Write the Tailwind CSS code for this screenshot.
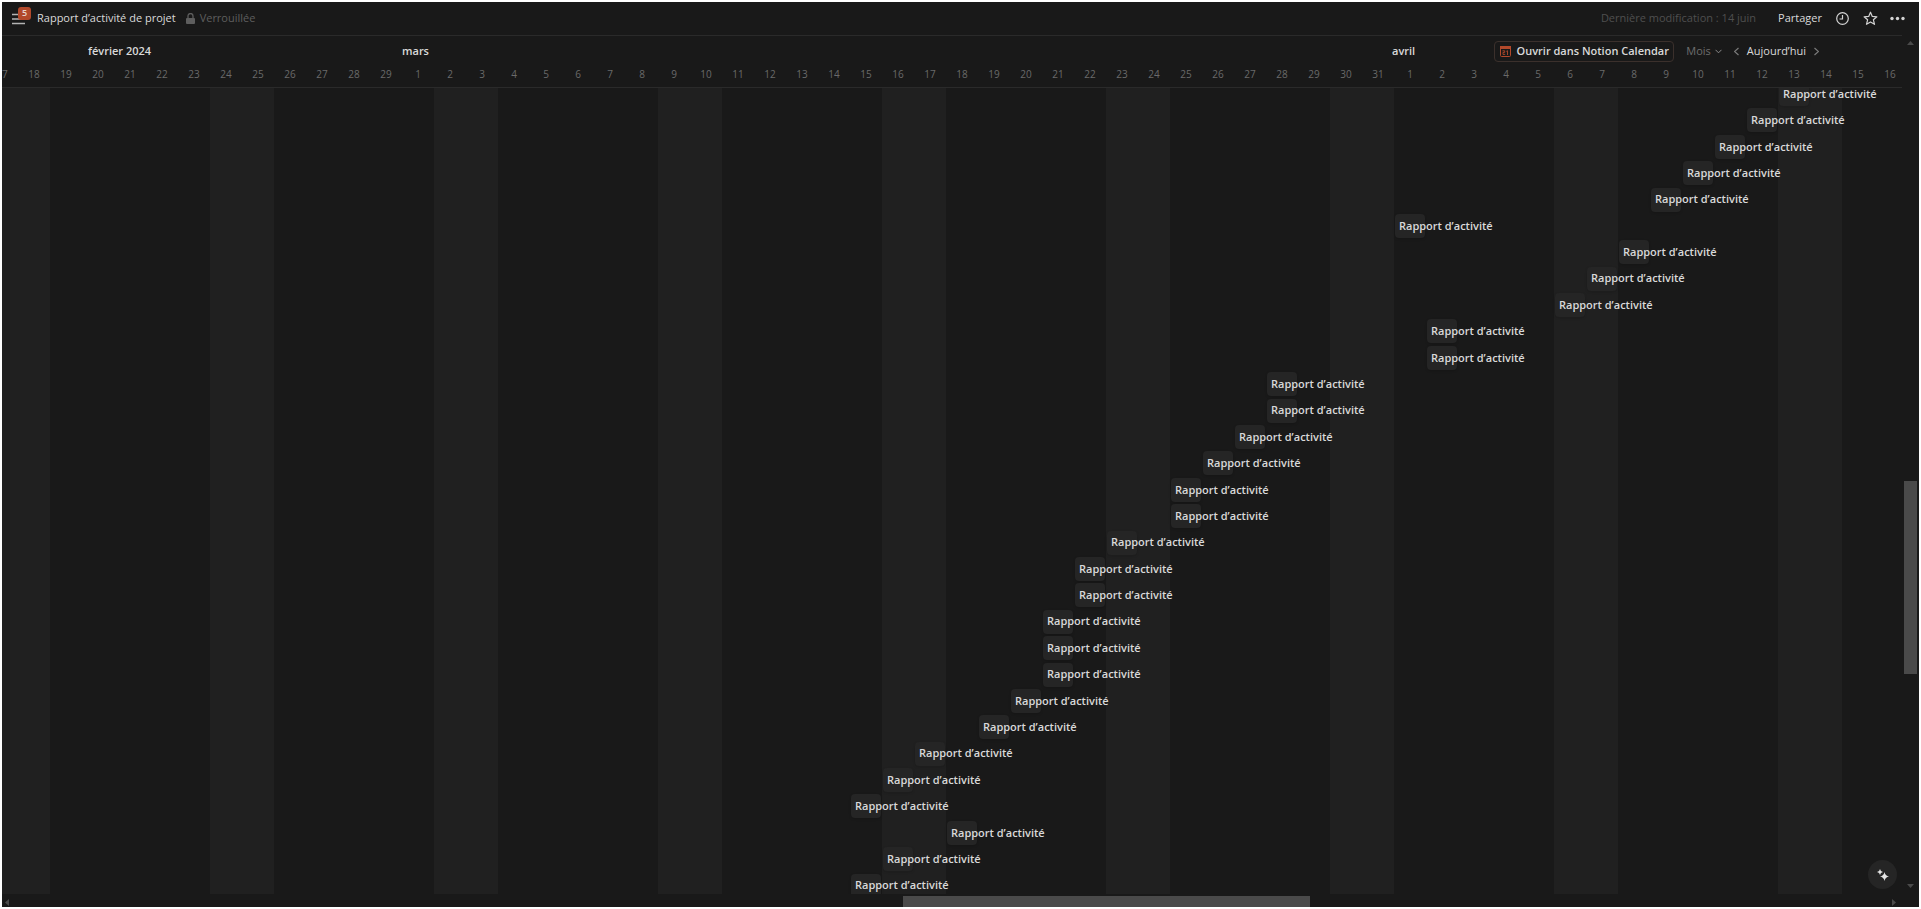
<!DOCTYPE html>
<html lang="fr">
<head>
<meta charset="utf-8">
<title>Rapport d’activité de projet</title>
<script src="https://cdn.jsdelivr.net/npm/@tailwindcss/browser@4"></script>
</head>
<body class="bg-white">
<div class="flex h-screen flex-col border-2 border-white bg-[#191919] font-['Open_Sans',sans-serif] text-[#d9d9d9]">
  <header class="flex h-[33px] shrink-0 items-center pr-3.5 pl-2.5 text-[11px]">
    <button class="relative h-5 w-[21px]" aria-label="Menu">
      <svg class="absolute top-1 left-0 h-3 w-[13px]" viewBox="0 0 13 12" stroke="#b4b4b4" stroke-width="1.5"><path d="M0 1.5h13M0 6h13M0 10.5h13"/></svg>
      <span class="absolute -top-0.5 left-1.5 flex h-[13px] w-[13px] items-center justify-center rounded-[3px] bg-[#b2492b] text-[9px] font-semibold text-[#e8d5cf]">5</span>
    </button>
    <h1 class="ml-1 font-medium">Rapport d’activité de projet</h1>
    <svg class="mr-[5px] ml-2.5 h-3 w-[9px]" viewBox="0 0 9 12" fill="#5e5e5e"><path d="M1 5h7a1 1 0 0 1 1 1v4a1 1 0 0 1-1 1H1a1 1 0 0 1-1-1V6a1 1 0 0 1 1-1z"/><path d="M2 5.500V3a2.500 2.500 0 0 1 5 0v2.500" fill="none" stroke="#5e5e5e" stroke-width="1.300"/></svg>
    <span class="text-[#5e5e5e]">Verrouillée</span>
    <span class="mr-[22px] ml-auto text-[#4f4f4f]">Dernière modification : 14 juin</span>
    <button class="font-medium">Partager</button>
    <button class="ml-3.5" aria-label="Historique"><svg class="size-[13px]" viewBox="0 0 13 13" fill="none" stroke="#d4d4d4" stroke-width="1.200"><circle cx="6.500" cy="6.500" r="5.800"/><path d="M6.500 3v4H3.500"/></svg></button>
    <button class="ml-3.5" aria-label="Favori"><svg class="size-[15px]" viewBox="0 0 15 15" fill="none" stroke="#d4d4d4" stroke-width="1.200" stroke-linejoin="round"><path d="M7.500 1.200l1.800 4.200 4.600.4-3.500 3 1.100 4.500-4-2.400-4 2.400 1.100-4.500-3.500-3 4.600-.4z"/></svg></button>
    <button class="ml-3" aria-label="Plus"><svg class="h-[5px] w-[15px]" viewBox="0 0 15 5" fill="#d4d4d4"><circle cx="2" cy="2.500" r="1.700"/><circle cx="7.500" cy="2.500" r="1.700"/><circle cx="13" cy="2.500" r="1.700"/></svg></button>
  </header>

  <div class="flex min-h-0 flex-1">
    <main class="relative flex min-w-0 flex-1 flex-col border-t border-[#2a2a2a]">
      <div class="flex h-[30px] shrink-0 items-center text-[11px]">
        <div class="grid h-full min-w-0 flex-1 grid-cols-[314px_990px_auto] items-center pl-[86px] font-semibold whitespace-nowrap">
          <span>février 2024</span><span>mars</span><span>avril</span>
        </div>
        <div class="flex shrink-0 items-center pr-[83px]">
          <button class="flex h-[21px] w-[180px] items-center justify-center gap-1.5 rounded border border-[#3b302c] font-semibold whitespace-nowrap">
            <svg class="size-[11px]" viewBox="0 0 11 11"><rect x=".5" y=".5" width="10" height="10" rx="1" fill="none" stroke="#b2492b"/><path d="M0 0h11v3H0z" fill="#b2492b"/><path d="M2.500 4.800h2.200v1.600H3v2h2.200M7.500 9V4.700l-1.200.700" fill="none" stroke="#b2492b" stroke-width=".9"/></svg>
            Ouvrir dans Notion Calendar
          </button>
          <button class="ml-3 flex items-center gap-1 text-[#6e6e6e]">Mois<svg class="h-[5px] w-[7px]" viewBox="0 0 7 5" fill="none" stroke="#8a8a8a"><path d="M.5.800l3 3 3-3"/></svg></button>
          <button class="ml-3" aria-label="Précédent"><svg class="h-[9px] w-[5px]" viewBox="0 0 5 9" fill="none" stroke="#7b7b7b" stroke-width="1.200"><path d="M4.500 1l-4 3.500 4 3.500"/></svg></button>
          <button class="mx-2 font-medium">Aujourd’hui</button>
          <button aria-label="Suivant"><svg class="h-[9px] w-[5px]" viewBox="0 0 5 9" fill="none" stroke="#7b7b7b" stroke-width="1.200"><path d="M.5 1l4 3.500-4 3.500"/></svg></button>
        </div>
      </div>
      <div class="h-[22px] shrink-0 overflow-hidden border-b border-[#2a2a2a]">
        <div id="days" class="-ml-4 grid grid-cols-[repeat(60,32px)] text-center text-[10px] leading-4 text-[#6a6a6a]"></div>
      </div>
      <div class="relative grid min-h-0 flex-1 overflow-hidden">
        <div id="weekends" class="col-start-1 row-start-1 -ml-4 grid grid-cols-[repeat(60,32px)]"></div>
        <div id="rows" class="col-start-1 row-start-1 -my-1.5 -ml-4 grid grid-cols-[repeat(60,32px)] grid-rows-[repeat(31,minmax(0,1fr))]"></div>
      </div>
      <button class="absolute right-[5px] bottom-[5px] flex size-[29px] items-center justify-center rounded-full bg-[#252525]" aria-label="Assistant IA">
        <svg class="size-3" viewBox="0 0 12 12" fill="#e4e4e4"><path d="M3 0q.4 2.600 3 3-2.600.4-3 3-.4-2.600-3-3 2.600-.4 3-3zM7.500 3q.7 3.800 4.500 4.500-3.800.7-4.500 4.500-.7-3.800-4.500-4.500 3.800-.7 4.500-4.500z"/></svg>
      </button>
    </main>
    <div class="relative flex w-[17px] shrink-0 flex-col items-center justify-between py-1.5">
      <svg class="h-1 w-[7px]" viewBox="0 0 7 4" fill="#4a4a4a"><path d="M0 4l3.500-4L7 4z"/></svg>
      <div class="absolute top-[446px] right-0.5 h-[193px] w-[13px] bg-[#4a4a4a]"></div>
      <svg class="h-1 w-[7px]" viewBox="0 0 7 4" fill="#4a4a4a"><path d="M0 0l3.500 4L7 0z"/></svg>
    </div>
  </div>
  <div class="relative mr-[17px] flex h-[13px] shrink-0 items-center justify-between pt-1 pr-1.5 pl-[3px]">
    <svg class="h-[7px] w-1" viewBox="0 0 4 7" fill="#4a4a4a"><path d="M4 0L0 3.500 4 7z"/></svg>
    <div class="absolute bottom-0 left-[901px] h-[11px] w-[407px] bg-[#4a4a4a]"></div>
    <svg class="h-[7px] w-1" viewBox="0 0 4 7" fill="#4a4a4a"><path d="M0 0l4 3.500L0 7z"/></svg>
  </div>
</div>
<script>
  const days = document.getElementById('days');
  const weekends = document.getElementById('weekends');
  const rows = document.getElementById('rows');
  const start = Date.UTC(2024, 1, 17);
  for (let i = 0; i < 60; i++) {
    const date = new Date(start + i * 86400000);
    days.insertAdjacentHTML('beforeend', `<span>${date.getUTCDate()}</span>`);
    const weekend = date.getUTCDay() % 6 === 0;
    weekends.insertAdjacentHTML('beforeend', weekend ? '<div class="bg-[#202020]"></div>' : '<div></div>');
  }
  const entries = [56, 55, 54, 53, 52, 44, 51, 50, 49, 45, 45, 40, 40, 39, 38, 37, 37, 35, 34, 34, 33, 33, 33, 32, 31, 29, 28, 27, 30, 28, 27];
  entries.forEach((day, row) => {
    rows.insertAdjacentHTML('beforeend',
      `<a href="#" class="ml-px flex h-6 w-[30px] items-center rounded bg-[#252525] pl-1 text-[11px] font-semibold whitespace-nowrap shadow-sm" style="grid-column:${day + 1};grid-row:${row + 1}">Rapport d’activité</a>`);
  });
</script>
</body>
</html>
